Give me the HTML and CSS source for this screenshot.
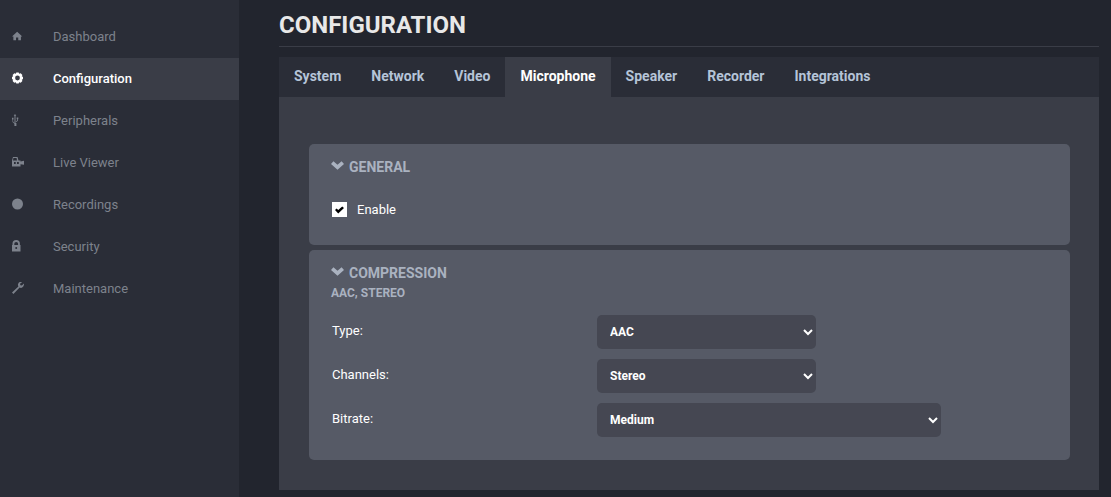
FILE: index.html
```html
<!DOCTYPE html>
<html lang="en">
<head>
    <meta charset="UTF-8">
    <title>Configuration</title>
    <link rel="stylesheet" href="styles.css">
</head>
<body>
    <div class="layout">
        <!-- === SIDEBAR === -->
        <nav class="sidebar">
            <a class="nav-item">
                <svg class="nav-icon" viewBox="0 -1 14 14"><path d="M6 1 L12 6.6 L10.4 6.6 L10.4 11 L7.3 11 L7.3 7.8 L4.7 7.8 L4.7 11 L1.6 11 L1.6 6.6 L0 6.6 Z"/></svg>
                Dashboard
            </a>
            <a class="nav-item active">
                <svg class="nav-icon" viewBox="0 0 12 12"><path fill-rule="evenodd" d="M4.3 .4 H6.7 L7.1 1.8 L8.7 1.2 L10.4 2.9 L9.8 4.4 L11 4.8 V7.2 L9.8 7.6 L10.4 9.1 L8.7 10.8 L7.1 10.2 L6.7 11.6 H4.3 L3.9 10.2 L2.3 10.8 L.6 9.1 L1.2 7.6 L0 7.2 V4.8 L1.2 4.4 L.6 2.9 L2.3 1.2 L3.9 1.8 Z M5.5 3.6 A2.4 2.4 0 1 0 5.5 8.4 A2.4 2.4 0 1 0 5.5 3.6 Z"/></svg>
                Configuration
            </a>
            <a class="nav-item">
                <svg class="nav-icon" viewBox="2.5 0 12 12"><path d="M5.5 0 L6.8 1.8 H6 V9 H6.9 V12 H4.9 V9.8 L3 8 V5.4 H2.5 V3.8 H4 V5.4 H3.6 V7.6 L5 8.9 V1.8 H4.2 Z M7.2 3.6 H8.8 V5.2 H8.5 V6.8 L6.4 8.2 V7.3 L7.7 6.4 V5.2 H7.2 Z"/></svg>
                Peripherals
            </a>
            <a class="nav-item">
                <svg class="nav-icon" viewBox="0 0 12 12"><path fill-rule="evenodd" d="M1 1 H5.5 L6.5 4.4 H8.5 V5.4 L12 4.8 V8.8 L8.5 8.2 V10.4 H0 V4.5 Z M1.4 2 L1 4.4 H5 L4.6 2 Z M2 6 V8 H3.7 V6 Z M5 6 V8 H6.8 V6 Z"/></svg>
                Live Viewer
            </a>
            <a class="nav-item">
                <svg class="nav-icon" viewBox="0 0 12 12"><circle cx="5.5" cy="6" r="5.5"/></svg>
                Recordings
            </a>
            <a class="nav-item">
                <svg class="nav-icon" viewBox="1.5 0 12 12"><path fill-rule="evenodd" d="M2 5 V3.8 A3.7 3.7 0 0 1 9.4 3.8 V5 H10 V11.5 H1.5 V5 Z M3.8 5 H7.6 V3.8 A1.9 1.9 0 0 0 3.8 3.8 Z M5.7 7 A1 1 0 1 0 5.7 9 A1 1 0 1 0 5.7 7 Z"/></svg>
                Security
            </a>
            <a class="nav-item">
                <svg class="nav-icon" viewBox="0 0 12 12"><path d="M12 1.6 L9.8 3.6 L8.4 3.2 L8 1.8 L10.2 0 A3.4 3.4 0 0 0 6 2.2 Q5.8 3.6 6.4 4.4 L0 10.4 L1.4 12 L7.6 5.6 Q9 6.2 10.2 5.6 Q12.2 4.4 12 1.6 Z"/></svg>
                Maintenance
            </a>
        </nav>

        <!-- === MAIN === -->
        <main class="main">
            <h1 class="page-title">CONFIGURATION</h1>

            <div class="tabs">
                <a class="tab">System</a>
                <a class="tab">Network</a>
                <a class="tab">Video</a>
                <a class="tab active">Microphone</a>
                <a class="tab">Speaker</a>
                <a class="tab">Recorder</a>
                <a class="tab">Integrations</a>
            </div>

            <div class="panel">
                <section class="card card-general">
                    <h2 class="card-title">
                        <svg class="chevron" viewBox="0 0 14 9"><path d="M2.6 0 L7 3.6 L11.4 0 L14 2.8 L7 9 L0 2.8 Z"/></svg>
                        GENERAL
                    </h2>
                    <label class="check-row">
                        <span class="check-box">
                            <svg viewBox="0 0 10 8"><path d="M0 4 L1.8 2.4 L3.6 4 L8 0 L10 1.8 L3.6 8 Z"/></svg>
                        </span>
                        Enable
                    </label>
                </section>

                <section class="card card-compression">
                    <h2 class="card-title">
                        <svg class="chevron" viewBox="0 0 14 9"><path d="M2.6 0 L7 3.6 L11.4 0 L14 2.8 L7 9 L0 2.8 Z"/></svg>
                        COMPRESSION
                    </h2>
                    <p class="card-sub">AAC, STEREO</p>
                    <div class="form-row">
                        <label class="form-label">Type:</label>
                        <select class="select select-short"><option>AAC</option></select>
                    </div>
                    <div class="form-row">
                        <label class="form-label">Channels:</label>
                        <select class="select select-short"><option>Stereo</option></select>
                    </div>
                    <div class="form-row">
                        <label class="form-label">Bitrate:</label>
                        <select class="select select-long"><option>Medium</option></select>
                    </div>
                </section>
            </div>
        </main>
    </div>
</body>
</html>
```

FILE: styles.css
```css
/* === BASE STYLES === */
* {
    margin: 0;
    padding: 0;
    box-sizing: border-box;
}

html, body {
    height: 100%;
    overflow: hidden;
}

body {
    font-family: Roboto, sans-serif;
    background: #22252e;
    color: #fff;
    font-size: 13px;
}

/* === LAYOUT === */
.layout {
    display: flex;
    height: 497px;
}

/* === SIDEBAR === */
.sidebar {
    width: 239px;
    flex-shrink: 0;
    background: #2a2d37;
    padding-top: 16px;
}

.nav-item {
    display: flex;
    align-items: center;
    height: 42px;
    padding-left: 12px;
    padding-bottom: 2px;
    color: #7d828c;
    font-size: 13px;
}

.nav-item.active {
    background: #3a3d47;
    color: #fff;
    font-weight: 500;
}

.nav-icon {
    width: 12px;
    height: 12px;
    margin-right: 29px;
    fill: #7d828c;
    flex-shrink: 0;
}

.nav-item.active .nav-icon {
    fill: #fff;
}

/* === MAIN === */
.main {
    width: 820px;
    margin-left: 40px;
}

.page-title {
    height: 47px;
    padding-top: 11px;
    border-bottom: 1px solid #3a3d47;
    color: #e8e8e8;
    font-size: 24px;
    font-weight: 700;
    line-height: 28px;
    margin-bottom: 10px;
}

/* === TABS === */
.tabs {
    display: flex;
    height: 40px;
    background: #2a2d37;
}

.tab {
    display: flex;
    align-items: center;
    padding: 0 15px 2px;
    color: #b5c4d8;
    font-size: 14px;
    font-weight: 700;
}

.tab.active {
    background: #3a3d47;
    color: #fff;
}

/* === PANEL === */
.panel {
    height: 393px;
    padding: 47px 29px 0 30px;
    background: #3a3d47;
}

.card {
    background: #565a66;
    border-radius: 5px;
    padding: 15px 22px 0;
}

.card-general {
    height: 101px;
    margin-bottom: 5px;
}

.card-compression {
    height: 210px;
}

.card-title {
    display: flex;
    align-items: center;
    gap: 5px;
    height: 16px;
    color: #aab2c0;
    font-size: 14px;
    font-weight: 700;
}

.chevron {
    width: 13px;
    height: 9px;
    fill: #aab2c0;
    margin-top: -4px;
}

.card-sub {
    margin-top: 5px;
    color: #aab2c0;
    font-size: 12px;
    font-weight: 700;
    line-height: 14px;
}

/* === FORM === */
.check-row {
    display: flex;
    align-items: center;
    margin-top: 27px;
    margin-left: 1px;
    font-size: 13px;
}

.check-box {
    display: flex;
    align-items: center;
    justify-content: center;
    width: 15px;
    height: 15px;
    margin-right: 10px;
    background: #fff;
}

.check-box svg {
    width: 9px;
    height: 8px;
}

.form-row {
    display: flex;
    align-items: flex-start;
    height: 34px;
    margin-bottom: 10px;
}

.card-sub + .form-row {
    margin-top: 16px;
}

.form-label {
    width: 265px;
    margin-left: 1px;
    line-height: 30px;
    font-size: 13px;
}

.select {
    height: 34px;
    margin-top: -1px;
    padding-left: 9px;
    background-color: #454752;
    color: #fff;
    border: none;
    border-radius: 5px;
    font-family: inherit;
    font-size: 12px;
    font-weight: 700;
}

.select-short {
    width: 219px;
}

.select-long {
    width: 344px;
}
```
